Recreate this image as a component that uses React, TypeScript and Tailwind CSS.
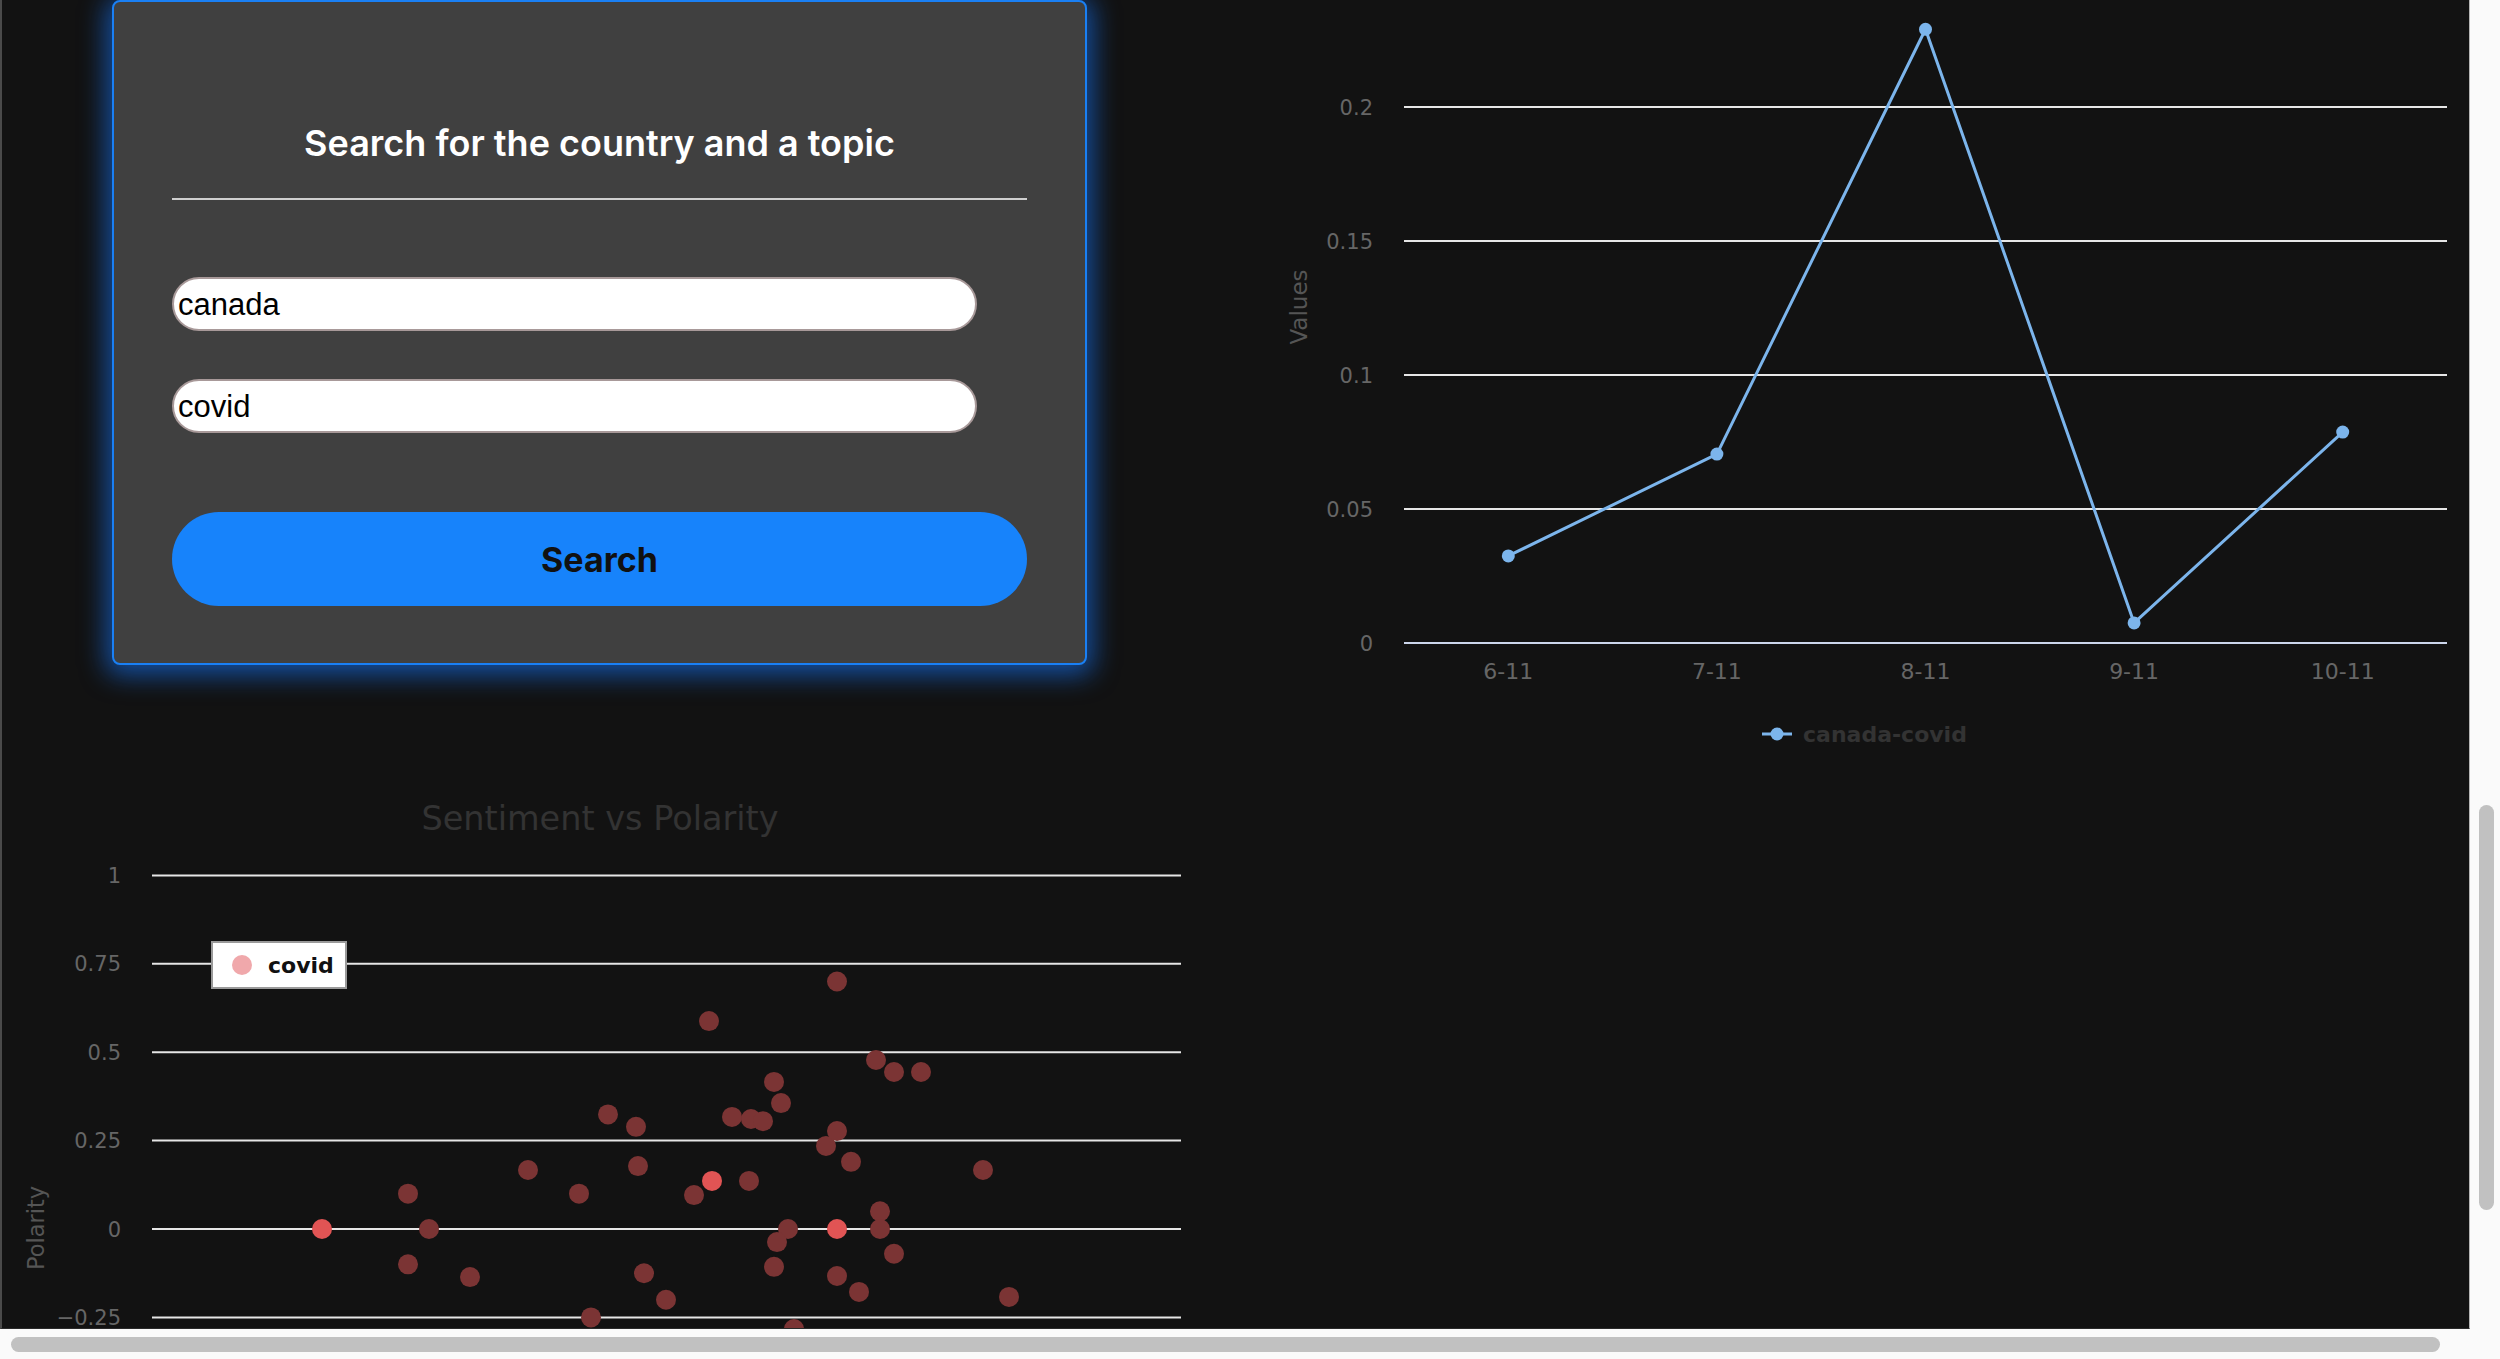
import React from "react";

// daily average sentiment for the searched country/topic
const SERIES = [
  { day: "6-11", value: 0.0325 },
  { day: "7-11", value: 0.0705 },
  { day: "8-11", value: 0.229 },
  { day: "9-11", value: 0.0075 },
  { day: "10-11", value: 0.0787 },
];

// tweets: x position (sentiment) in px, polarity value, hot = several overlapping points
const TWEETS: { x: number; p: number; hot?: boolean }[] = [
  { x: 322, p: 0, hot: true },
  { x: 408, p: 0.1 },
  { x: 429, p: 0 },
  { x: 408, p: -0.1 },
  { x: 470, p: -0.136 },
  { x: 528, p: 0.167 },
  { x: 579, p: 0.1 },
  { x: 608, p: 0.324 },
  { x: 636, p: 0.289 },
  { x: 638, p: 0.178 },
  { x: 644, p: -0.125 },
  { x: 666, p: -0.2 },
  { x: 591, p: -0.25 },
  { x: 694, p: 0.096 },
  { x: 709, p: 0.588 },
  { x: 732, p: 0.317 },
  { x: 751, p: 0.311 },
  { x: 763, p: 0.305 },
  { x: 774, p: 0.416 },
  { x: 781, p: 0.356 },
  { x: 749, p: 0.136 },
  { x: 788, p: 0 },
  { x: 777, p: -0.037 },
  { x: 774, p: -0.107 },
  { x: 826, p: 0.235 },
  { x: 837, p: 0.277 },
  { x: 851, p: 0.19 },
  { x: 837, p: 0.7 },
  { x: 876, p: 0.478 },
  { x: 894, p: 0.444 },
  { x: 921, p: 0.444 },
  { x: 880, p: 0.05 },
  { x: 880, p: 0 },
  { x: 894, p: -0.07 },
  { x: 837, p: -0.133 },
  { x: 859, p: -0.178 },
  { x: 983, p: 0.167 },
  { x: 1009, p: -0.192 },
  { x: 794, p: -0.283 },
  { x: 712, p: 0.136, hot: true },
  { x: 837, p: 0, hot: true },
];

const LINE = { left: 1404, right: 2447, zero: 643, perUnit: 2680 };
const SCAT = { left: 152, right: 1181, zero: 1229, perUnit: 353.6 };

function SearchCard() {
  return (
    <section className="ml-[110px] flex h-[665px] w-[975px] shrink-0 flex-col rounded-lg border-2 border-[#1a80f5] bg-[#404040] px-[58px] shadow-[0_4px_26px_6px_rgba(22,120,255,0.6)]">
      <h1 className="mt-[123px] text-center font-['Inter',sans-serif] text-[36px] font-semibold leading-none text-white">
        Search for the country and a topic
      </h1>
      <div className="mt-[37px] h-[2px] bg-[#cfcfcf]" />
      <input
        defaultValue="canada"
        className="mt-[77px] h-[54px] w-[805px] rounded-full border-2 border-[#a89999] bg-white px-[4px] pt-[2px] font-['Liberation_Sans',Arial,sans-serif] text-[31px] text-black outline-none"
      />
      <input
        defaultValue="covid"
        className="mt-[48px] h-[54px] w-[805px] rounded-full border-2 border-[#a89999] bg-white px-[4px] pt-[2px] font-['Liberation_Sans',Arial,sans-serif] text-[31px] text-black outline-none"
      />
      <button className="mt-[79px] h-[94px] w-full rounded-full bg-[#1783fb] font-['Inter',sans-serif] text-[34px] font-bold text-[#111]">
        Search
      </button>
    </section>
  );
}

function ScatterChart() {
  const ticks = [1, 0.75, 0.5, 0.25, 0, -0.25];
  const y = (p: number) => SCAT.zero - p * SCAT.perUnit;
  return (
    <svg
      width={1240}
      height={628}
      viewBox="2 700 1240 628"
      className="mt-[35px] block shrink-0 font-['DejaVu_Sans',sans-serif]"
    >
      <text x={600} y={830} fontSize={33.5} fill="#333" textAnchor="middle">
        Sentiment vs Polarity
      </text>
      {ticks.map((t) => (
        <g key={t}>
          <line x1={SCAT.left} x2={SCAT.right} y1={y(t)} y2={y(t)} stroke="#e6e6e6" strokeWidth={2} />
          <text x={121} y={y(t) + 7.5} fontSize={21} fill="#666" textAnchor="end">
            {t < 0 ? `−${Math.abs(t)}` : t}
          </text>
        </g>
      ))}
      <text
        x={37}
        y={1228}
        fontSize={22.5}
        fill="#555"
        textAnchor="middle"
        dominantBaseline="middle"
        transform="rotate(-90 37 1228)"
      >
        Polarity
      </text>
      {TWEETS.map((d, i) => (
        <circle key={i} cx={d.x} cy={y(d.p)} r={10} fill={d.hot ? "#e15454" : "#7b3434"} />
      ))}
      <rect x={212} y={942} width={134} height={46} fill="#fff" stroke="#9a9a9a" strokeWidth={2} />
      <circle cx={242} cy={965} r={10} fill="#f0a8ab" />
      <text x={268} y={973} fontSize={22} fontWeight="bold" fill="#111">
        covid
      </text>
    </svg>
  );
}

function LineChart() {
  const step = (LINE.right - LINE.left) / SERIES.length;
  const pts = SERIES.map((d, i) => ({
    ...d,
    x: LINE.left + step * (i + 0.5),
    y: LINE.zero - d.value * LINE.perUnit,
  }));
  const ticks = [0.2, 0.15, 0.1, 0.05, 0];
  return (
    <svg
      width={1227}
      height={800}
      viewBox="1242 0 1227 800"
      className="block shrink-0 font-['DejaVu_Sans',sans-serif]"
    >
      {ticks.map((t) => {
        const ty = LINE.zero - t * LINE.perUnit;
        return (
          <g key={t}>
            <line
              x1={LINE.left}
              x2={LINE.right}
              y1={ty}
              y2={ty}
              stroke={t === 0 ? "#ccd6eb" : "#e6e6e6"}
              strokeWidth={2}
            />
            <text x={1373} y={ty + 7.5} fontSize={21} fill="#666" textAnchor="end">
              {t}
            </text>
          </g>
        );
      })}
      <text
        x={1300}
        y={307}
        fontSize={23}
        fill="#555"
        textAnchor="middle"
        dominantBaseline="middle"
        transform="rotate(-90 1300 307)"
      >
        Values
      </text>
      <polyline
        points={pts.map((p) => `${p.x},${p.y}`).join(" ")}
        fill="none"
        stroke="#7cb5ec"
        strokeWidth={3}
        strokeLinejoin="round"
      />
      {pts.map((p) => (
        <g key={p.day}>
          <circle cx={p.x} cy={p.y} r={6.5} fill="#7cb5ec" />
          <text x={p.x} y={679} fontSize={22} fill="#666" textAnchor="middle">
            {p.day}
          </text>
        </g>
      ))}
      <line x1={1762} x2={1792} y1={734} y2={734} stroke="#7cb5ec" strokeWidth={3} />
      <circle cx={1777} cy={734} r={6.5} fill="#7cb5ec" />
      <text x={1803} y={742} fontSize={22} fontWeight="bold" fill="#333">
        canada-covid
      </text>
    </svg>
  );
}

export default function App() {
  return (
    <div className="grid h-[1359px] w-[2500px] grid-cols-[2470px_30px] grid-rows-[1329px_30px] overflow-hidden bg-[#fafafa]">
      <main className="flex overflow-hidden border-b border-l-2 border-r border-b-[#2a2a2a] border-l-[#4a4a4a] border-r-[#b5b5b5] bg-[#121212]">
        <div className="flex w-[1240px] shrink-0 flex-col">
          <SearchCard />
          <ScatterChart />
        </div>
        <LineChart />
      </main>
      {/* scrollbars */}
      <div className="pl-[9px] pt-[805px]">
        <div className="h-[405px] w-[15px] rounded-full bg-[#c1c1c1]" />
      </div>
      <div className="pl-[11px] pt-[8px]">
        <div className="h-[15px] w-[2429px] rounded-full bg-[#c1c1c1]" />
      </div>
      <div />
    </div>
  );
}
